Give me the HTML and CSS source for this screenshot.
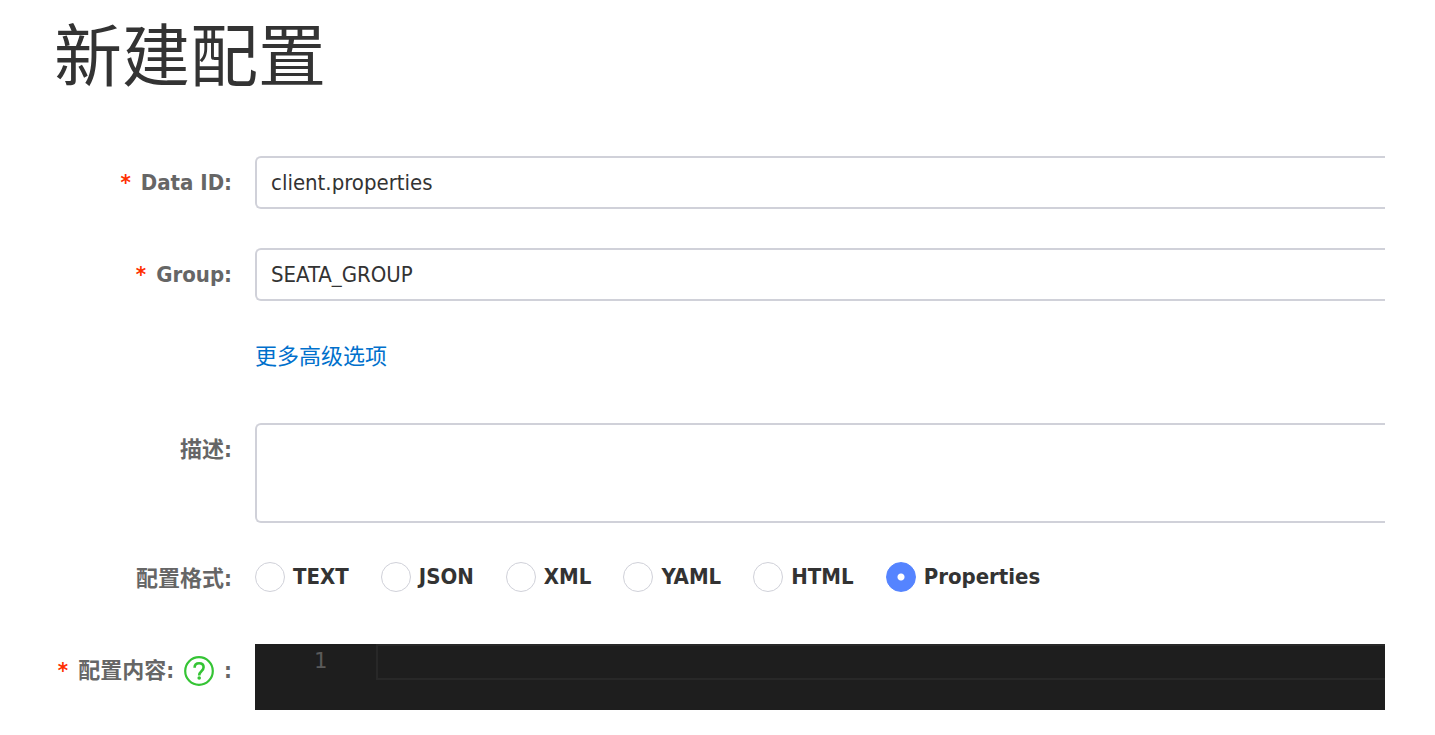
FILE: index.html
```html
<!DOCTYPE html>
<html lang="zh-CN">
<head>
<meta charset="utf-8">
<title>新建配置</title>
<link rel="stylesheet" href="styles.css">
</head>
<body>
<main class="page">
  <h1 class="title">新建配置</h1>
  <form class="form">
    <div class="row">
      <label class="label" for="data-id"><span class="required">*</span>Data ID:</label>
      <input class="field" id="data-id" type="text" value="client.properties">
    </div>
    <div class="row">
      <label class="label" for="group"><span class="required">*</span>Group:</label>
      <input class="field" id="group" type="text" value="SEATA_GROUP">
    </div>
    <div class="row row-more">
      <a class="more" href="#advanced">更多高级选项</a>
    </div>
    <div class="row row-description">
      <label class="label" for="description">描述:</label>
      <textarea class="field area" id="description"></textarea>
    </div>
    <div class="row row-format" role="radiogroup" aria-labelledby="format-label">
      <span class="label" id="format-label">配置格式:</span>
      <div class="options">
        <label class="option"><input class="radio" type="radio" name="format">TEXT</label>
        <label class="option"><input class="radio" type="radio" name="format">JSON</label>
        <label class="option"><input class="radio" type="radio" name="format">XML</label>
        <label class="option"><input class="radio" type="radio" name="format">YAML</label>
        <label class="option"><input class="radio" type="radio" name="format">HTML</label>
        <label class="option"><input class="radio" type="radio" name="format" checked>Properties</label>
      </div>
    </div>
    <div class="row">
      <label class="label" for="content"><span class="required">*</span>配置内容:
        <svg class="help" viewBox="0 0 30 30" fill="none" stroke="#35c435" aria-hidden="true">
          <circle cx="15" cy="15" r="13.8" stroke-width="2.2"/>
          <path d="M10.6 11.8C10.6 8.9 12.4 7.2 15.1 7.2c2.7 0 4.5 1.7 4.5 4.1 0 2-1 3-2.4 4.2-1.4 1.2-2 2-2 3.9" stroke-width="2.6"/>
          <circle cx="15.2" cy="22" r="1.8" fill="#35c435" stroke="none"/>
        </svg>:</label>
      <div class="editor">
        <span class="line-number">1</span>
        <textarea class="code" id="content" rows="1" spellcheck="false"></textarea>
      </div>
    </div>
  </form>
</main>
</body>
</html>
```
FILE: styles.css
```css
* {
  box-sizing: border-box;
}

body {
  margin: 0;
  background: #fff;
  color: #333;
  font-family: "DejaVu Sans Condensed", "Noto Sans CJK SC", sans-serif;
  font-size: 22px;
  line-height: 30px;
}

.page {
  padding: 2px 50px 24px 54px;
}

.title {
  margin: 0 0 54px;
  font-size: 68px;
  font-weight: 400;
  line-height: 100px;
  font-family: "Noto Sans CJK SC", sans-serif;
}

.form {
  display: flex;
  flex-direction: column;
  gap: 39px;
}

.row {
  display: grid;
  grid-template-columns: 178px minmax(0, 1fr);
  column-gap: 23px;
  align-items: start;
}

.label {
  display: flex;
  align-items: center;
  justify-content: flex-end;
  gap: 10px;
  padding-top: 12px;
  color: #666;
  font-weight: 700;
  white-space: nowrap;
}

.required {
  color: #ff3000;
}

.field {
  width: 100%;
  height: 53px;
  margin: 0;
  padding: 0 14px;
  border: 2px solid #d0d1d9;
  border-right: 0;
  border-radius: 6px 0 0 6px;
  background: #fff;
  color: #333;
  font: inherit;
  outline: 0;
}

.area {
  display: block;
  height: 100px;
  padding: 8px 14px;
  resize: none;
}

.row-more {
  padding-top: 2px;
  margin-bottom: 12px;
}

.more {
  grid-column: 2;
  justify-self: start;
  color: #0070cc;
  text-decoration: none;
}

.row-format {
  margin-bottom: 11px;
}

.row-format .label {
  padding-top: 2px;
}

.options {
  display: flex;
  flex-wrap: wrap;
  gap: 32px;
}

.option {
  display: flex;
  align-items: center;
  gap: 8px;
  font-weight: 700;
}

.radio {
  appearance: none;
  width: 30px;
  height: 30px;
  margin: 0;
  border: 1px solid #d0d1d9;
  border-radius: 50%;
  background: #fff;
}

.radio:checked {
  border-color: #5584ff;
  background: radial-gradient(circle, #fff 3px, #5584ff 4px);
}

.help {
  width: 30px;
  height: 30px;
}

.editor {
  display: grid;
  grid-template-columns: 72px minmax(0, 1fr);
  column-gap: 49px;
  height: 66px;
  background: #1e1e1e;
  align-items: start;
}

.line-number {
  padding-top: 2px;
  color: #5a5a5a;
  font-family: "DejaVu Sans Mono", monospace;
  text-align: right;
}

.code {
  display: block;
  width: 100%;
  height: 36px;
  margin: 0;
  padding: 2px 4px;
  border: 2px solid #282828;
  border-right: 0;
  background: #1e1e1e;
  color: #d4d4d4;
  font-family: "DejaVu Sans Mono", monospace;
  font-size: 22px;
  resize: none;
  outline: 0;
}
```
